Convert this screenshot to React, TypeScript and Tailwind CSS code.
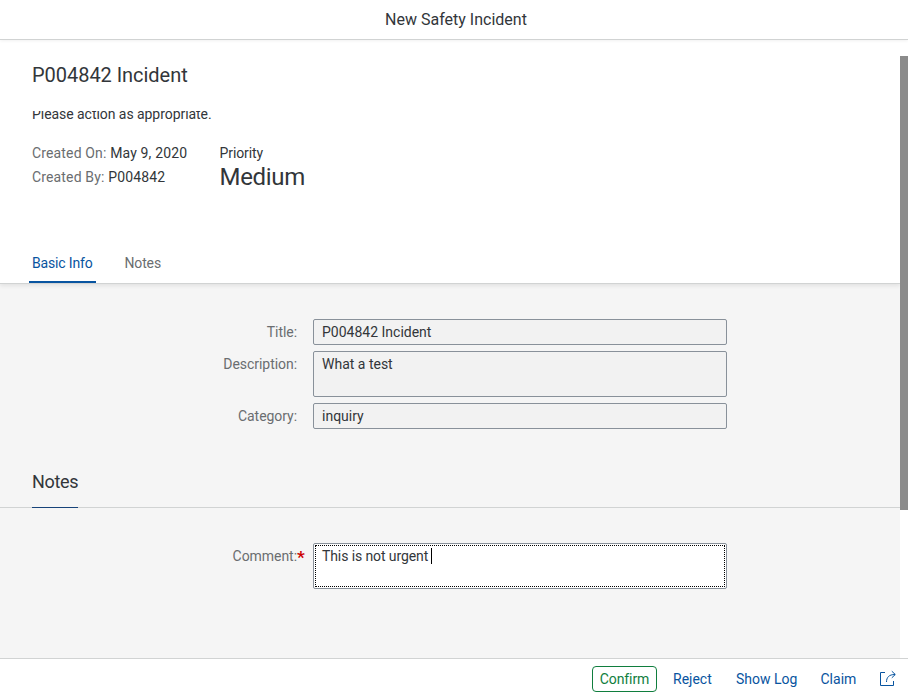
import type { ReactNode } from "react";

function Field({ label, required, children }: { label: string; required?: boolean; children: ReactNode }) {
  return (
    <div className="flex items-start">
      <div className="relative w-[297px] pt-[5px] text-right leading-4 tracking-[-0.05px] text-[#6a6d70]">
        {label}
        {required && <span className="absolute left-full top-[6px] text-[17px] font-bold text-[#c00]">*</span>}
      </div>
      <div className="ml-4 w-[414px]">{children}</div>
    </div>
  );
}

function ShareIcon() {
  return (
    <svg width="18" height="18" viewBox="0 0 18 18" fill="none" stroke="#0854a0" strokeWidth="1">
      <path d="M6 2.5H1.5V15.5H14.5V11" />
      <path d="M7.5 12C7.5 7.5 9.8 4.5 16 4.5M12.8 1.2L16.3 4.5L12.8 7.8" />
    </svg>
  );
}

export default function App() {
  return (
    <div className="flex h-[696px] w-[908px] flex-col overflow-hidden bg-white font-['Roboto',sans-serif] text-[14px] text-[#32363a]">
      <header className="z-10 h-10 shrink-0 border-b border-[#d1d3d3] bg-white pl-1 text-center text-[16px] leading-[39px] shadow-[0_1px_3px_rgba(0,0,0,0.06)]">
        New Safety Incident
      </header>
      <div className="flex min-h-0 flex-1">
        <main className="flex w-[900px] flex-col bg-[#f5f5f5]">
          <section className="h-[244px] shrink-0 border-b border-[#d1d3d3] bg-white px-8 pt-[23px] shadow-[0_2px_4px_rgba(0,0,0,0.08)]">
            <h1 className="h-6 whitespace-nowrap text-[20px] leading-6 tracking-[-0.04px]">P004842 Incident</h1>
            <div className="mt-[24px] flex h-4 items-start overflow-hidden">
              <p className="-mt-[7px] leading-[20px] tracking-[-0.05px]">Please action as appropriate.</p>
            </div>
            <div className="mt-[14px] flex h-24 gap-8">
              <div className="w-[155.5px] whitespace-nowrap leading-6 tracking-[0.15px]">
                <p className="text-[#6a6d70]">Created On: <span className="text-[#32363a]">May 9, 2020</span></p>
                <p className="text-[#6a6d70]">Created By: <span className="text-[#32363a]">P004842</span></p>
              </div>
              <div>
                <p className="leading-6 tracking-[-0.1px]">Priority</p>
                <p className="text-[24px] leading-6 tracking-[-0.3px]">Medium</p>
              </div>
            </div>
            <nav className="flex h-[46px] gap-[26px]">
              <span className="-ml-[3px] w-[67px] rounded-t-[2px] border-b-2 border-[#0854a0] pl-[3px] pt-4 leading-5 tracking-[-0.15px] text-[#0854a0]">Basic Info</span>
              <span className="pl-[2.5px] pt-4 leading-5 tracking-[-0.15px] text-[#6a6d70]">Notes</span>
            </nav>
          </section>
          <section className="flex flex-col gap-[6px] pt-[35px]">
            <Field label="Title:">
              <div className="h-[26px] rounded-[2px] border border-[#89919a] bg-[#f2f2f2] px-2 leading-6">P004842 Incident</div>
            </Field>
            <Field label="Description:">
              <div className="h-[46px] rounded-[2px] border border-[#89919a] bg-[#f2f2f2] px-2 leading-6">What a test</div>
            </Field>
            <Field label="Category:">
              <div className="h-[26px] rounded-[2px] border border-[#89919a] bg-[#f2f2f2] px-2 leading-6">inquiry</div>
            </Field>
          </section>
          <section className="mt-[41px] h-[38px] shrink-0 border-b border-[#d1d3d3] px-8">
            <h2 className="h-[38px] w-[46px] border-b border-[#174379] text-[18px] leading-6 tracking-[-0.3px]">Notes</h2>
          </section>
          <section className="pt-[35px]">
            <Field label="Comment:" required>
              <div className="h-[46px] rounded-[2px] border border-[#89919a] bg-white p-px">
                <div className="flex h-full items-start border border-dotted border-black px-[6px] leading-[21px]">
                  <span className="tracking-[-0.1px]">This is not urgent</span>
                  <span className="ml-[3px] mt-[2px] h-4 w-px bg-black" />
                </div>
              </div>
            </Field>
          </section>
        </main>
        <div className="w-2 bg-white pt-4">
          <div className="h-[454px] bg-[#8b8b8b]" />
        </div>
      </div>
      <footer className="flex h-[38px] shrink-0 items-start border-t border-[#d1d3d3] pt-[7px] leading-[26px] text-[#0854a0]">
        <button className="ml-[592px] h-[26px] w-[65px] rounded-[4px] border border-[#107e3e] text-center leading-6 tracking-[-0.1px] text-[#107e3e]">Confirm</button>
        <button className="ml-4 w-[39px] whitespace-nowrap text-left">Reject</button>
        <button className="ml-6 w-[61px] whitespace-nowrap text-left">Show Log</button>
        <button className="ml-[23.5px] w-[36px] whitespace-nowrap text-left">Claim</button>
        <button className="ml-[22.5px] mt-1"><ShareIcon /></button>
      </footer>
    </div>
  );
}
